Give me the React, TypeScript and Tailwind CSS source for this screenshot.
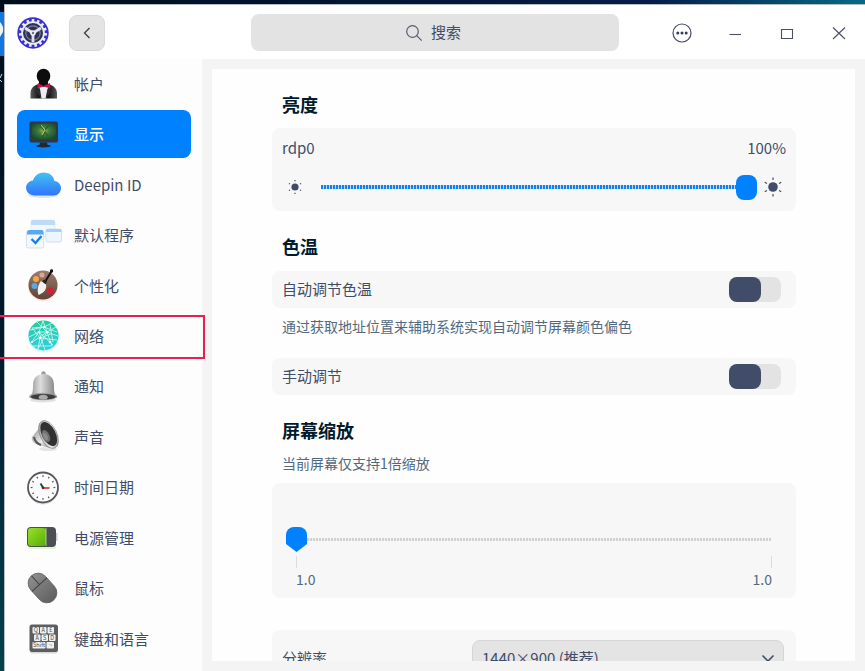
import React, { useState } from 'react';

const AccountIcon = () => (
  <>
    <defs>
      <linearGradient id="suit" x1="0" x2="1">
        <stop offset="0" stopColor="#5a5a5a" />
        <stop offset="0.3" stopColor="#161616" />
        <stop offset="0.7" stopColor="#161616" />
        <stop offset="1" stopColor="#5a5a5a" />
      </linearGradient>
    </defs>
    <path d="M5.500 32.500v-5c0-5 3-8 8-9.500h10c5 1.500 8.500 4.500 8.500 9.500v5z" fill="url(#suit)" />
    <path d="M13.500 20h10l-2.500 12.500h-5z" fill="#ececf2" />
    <path d="M13 20l2 3 1.500 9.500-5-6zM24.500 20l-2 3-2 9.500 5-6z" fill="#2c2c2c" />
    <ellipse cx="18.500" cy="10" rx="6.800" ry="7.300" fill="#0d0d0d" />
    <path d="M14 15h9v3l-4.500 3-4.500-3z" fill="#0d0d0d" />
    <path d="M13 17l5.500 3 6.500-3 .5 5.500-7-2-6.500 2z" fill="#c01350" />
  </>
);

const DisplayIcon = () => (
  <>
    <defs>
      <radialGradient id="screen" cx="0.5" cy="0.45" r="0.6">
        <stop offset="0" stopColor="#8fb84e" />
        <stop offset="0.4" stopColor="#3c7a3c" />
        <stop offset="1" stopColor="#164a32" />
      </radialGradient>
    </defs>
    <rect x="4.500" y="5.500" width="28.500" height="21" rx="2" fill="#33373d" />
    <rect x="6.500" y="7.500" width="24.500" height="16" fill="url(#screen)" />
    <path d="M15 9l5 6-3 7M24 9l-5 6 4 5" fill="none" stroke="#2b5a30" strokeWidth="1.200" />
    <path d="M16 9l4 5-3 5" fill="none" stroke="#c9d36a" strokeWidth="1" />
    <path d="M15 26.500h7l.5 2.500h-8z" fill="#24272b" />
    <ellipse cx="18.500" cy="30" rx="7.500" ry="1.500" fill="#24272b" />
  </>
);

const CloudIcon = () => (
  <>
    <defs>
      <linearGradient id="cloud" x1="0" y1="0" x2="0" y2="1">
        <stop offset="0" stopColor="#3fc4f4" />
        <stop offset="1" stopColor="#3373fb" />
      </linearGradient>
    </defs>
    <ellipse cx="18" cy="28" rx="15" ry="3" fill="#d7e6fb" />
    <path
      d="M9 28.500a8 8 0 0 1-8-7.500c0-4 3-7 7-7.500C9.500 9 13.500 5.500 19 5.500c5.500 0 9.500 3.500 10.500 8.500 4 .5 6.500 3.500 6.500 7 0 4-3 7.500-7.500 7.500z"
      fill="url(#cloud)"
    />
  </>
);

const DefaultAppsIcon = () => (
  <>
    <rect x="6" y="3" width="24" height="17" rx="2" fill="#f1f7fe" stroke="#dbe8f5" strokeWidth="0.7" />
    <path d="M6 8V5q0-2 2-2h20q2 0 2 2v3z" fill="#bedbf6" />
    <rect x="21" y="12" width="15.500" height="13" rx="1.500" fill="#edf5fe" stroke="#c5d8ea" strokeWidth="0.800" />
    <path d="M21 15v-1.500q0-1.500 1.500-1.500H35q1.500 0 1.500 1.500V15z" fill="#a9cff4" />
    <rect x="1.500" y="14" width="17" height="17" rx="1.500" fill="#f3f8fe" stroke="#cbdced" strokeWidth="0.800" />
    <path d="M2 17.500v-2Q2 13 4 13h12.500q2 0 2 2v2.500z" fill="#57a8f2" />
    <path d="M6.500 22l4 4 6-7" fill="none" stroke="#1582e8" strokeWidth="2.400" />
  </>
);

const PaletteIcon = () => (
  <>
    <defs>
      <linearGradient id="wood" x1="0" y1="0" x2="0" y2="1">
        <stop offset="0" stopColor="#9b7c6c" />
        <stop offset="1" stopColor="#5d4436" />
      </linearGradient>
    </defs>
    <circle cx="18" cy="18.500" r="15" fill="#f6d9cc" opacity="0.600" />
    <circle cx="18" cy="17" r="14.500" fill="url(#wood)" />
    <circle cx="11" cy="11" r="3" fill="#f2a840" />
    <circle cx="17" cy="7" r="2.600" fill="#e5a197" />
    <circle cx="9.500" cy="18" r="3" fill="#5aa7ea" />
    <circle cx="25" cy="23" r="3.500" fill="#cf2038" />
    <path d="M27 2.500l-8 13" stroke="#17120f" strokeWidth="2" strokeLinecap="round" />
    <circle cx="26.500" cy="3" r="1.700" fill="#17120f" />
    <path d="M16 13l5 3.500c1 5-2 8-7.500 10.500-2-6 0-10.500 2.500-14z" fill="#f4f1ee" />
    <path d="M17 13l3-1.500 2 1.500-1 3z" fill="#29211e" />
  </>
);

const NetworkIcon = () => (
  <>
    <defs>
      <linearGradient id="globe" x1="0" y1="0" x2="0" y2="1">
        <stop offset="0" stopColor="#29cba0" />
        <stop offset="1" stopColor="#2bd0e5" />
      </linearGradient>
    </defs>
    <circle cx="18.500" cy="19" r="15.500" fill="#cdf5f4" opacity="0.700" />
    <circle cx="18.500" cy="17.500" r="15" fill="url(#globe)" />
    <g fill="none" stroke="#c4f7ed" strokeWidth="0.900">
      <path d="M18 3l-4 11 6 18M18 3l4 11-9 17M5 12l14-3 13 5M4 19l10-5 8 0 11 4M6 25l8-11 14 13M31 9l-9 5-16 11M12 4l10 10 5 14M27 5l-8 4-12 1M7 10l8 10 17 2M15 20l-2 11M15 20l11-4M8 28l19 0M25 7l3 17" />
    </g>
    <g fill="#f0fffc">
      <circle cx="14" cy="14" r="1.300" />
      <circle cx="22" cy="14" r="1.300" />
      <circle cx="15" cy="20" r="1.300" />
      <circle cx="19" cy="9" r="1.200" />
      <circle cx="25" cy="24" r="1.300" />
      <circle cx="7" cy="24" r="1" />
    </g>
  </>
);

const BellIcon = () => (
  <>
    <defs>
      <linearGradient id="bell" x1="0" x2="1">
        <stop offset="0" stopColor="#8c8c8c" />
        <stop offset="0.4" stopColor="#dedede" />
        <stop offset="1" stopColor="#777" />
      </linearGradient>
    </defs>
    <ellipse cx="18" cy="31" rx="13" ry="2.500" fill="#e2e2e2" />
    <circle cx="18.500" cy="4.500" r="2.200" fill="#9c9c9c" />
    <path d="M4 28.500c3-2.500 4-5 4-12C8 9 12 5 18.500 5S29 9 29 16.500c0 7 .5 9.500 3.500 12z" fill="url(#bell)" />
    <ellipse cx="18.200" cy="27.500" rx="14" ry="3.800" fill="#a0a0a0" />
    <ellipse cx="18.200" cy="27.800" rx="12.500" ry="2.800" fill="#3c3c3c" />
    <ellipse cx="18.200" cy="28.300" rx="4.500" ry="2.500" fill="#aaa" />
  </>
);

const SpeakerIcon = () => (
  <>
    <defs>
      <linearGradient id="rim" x1="0" x2="1" y2="1">
        <stop offset="0" stopColor="#8e8e8e" />
        <stop offset="0.6" stopColor="#ececec" />
        <stop offset="1" stopColor="#777" />
      </linearGradient>
    </defs>
    <ellipse cx="23" cy="30" rx="9" ry="2" fill="#e5e5e5" />
    <path d="M7 18l8-10 11 21-13-3c-4-1-7-4-6-8z" fill="url(#rim)" />
    <path d="M9 18q1 6 7 8" fill="none" stroke="#555" strokeWidth="2" />
    <ellipse cx="23.500" cy="15.500" rx="8.300" ry="15" fill="url(#rim)" stroke="#707070" strokeWidth="0.500" transform="rotate(-26 23.500 15.500)" />
    <ellipse cx="23.700" cy="15" rx="6.800" ry="13" fill="#303030" transform="rotate(-26 23.700 15)" />
    <ellipse cx="21" cy="17" rx="3.500" ry="6.500" fill="#6e6e6e" transform="rotate(-26 21 17)" />
    <ellipse cx="20.500" cy="17.500" rx="2" ry="4" fill="#8b8b8b" transform="rotate(-26 20.500 17.500)" />
  </>
);

const ClockIcon = () => (
  <>
    <circle cx="18" cy="19" r="15.500" fill="#d9d9d9" opacity="0.700" />
    <circle cx="18" cy="17.500" r="15" fill="#fbfbfb" stroke="#55585c" strokeWidth="1.800" />
    {[0, 30, 60, 90, 120, 150, 180, 210, 240, 270, 300, 330].map((a) => (
      <path key={a} d="M18 5.200v1.800" stroke="#55585c" strokeWidth="1.200" transform={`rotate(${a} 18 17.500)`} />
    ))}
    <path d="M18 17.500l-2.500-4" stroke="#333" strokeWidth="1.800" />
    <path d="M18 18h6.500" stroke="#df4040" strokeWidth="1.800" />
    <circle cx="18" cy="17.800" r="1.400" fill="#333" />
  </>
);

const BatteryIcon = () => (
  <>
    <defs>
      <linearGradient id="charge" x1="0" y1="0" x2="1" y2="1">
        <stop offset="0" stopColor="#9be02a" />
        <stop offset="1" stopColor="#55ad05" />
      </linearGradient>
    </defs>
    <rect x="3" y="24" width="28" height="5" rx="2.500" fill="#e6f2d6" />
    <path d="M31 13h1.500v8H31z" fill="#c9cbd0" />
    <rect x="2" y="7" width="29" height="20" rx="4" fill="#4b4e54" />
    <rect x="3" y="8" width="18" height="18" rx="3" fill="url(#charge)" />
    <path d="M21 8v18" stroke="#c5e88d" strokeWidth="0.800" />
  </>
);

const MouseIcon = () => (
  <>
    <defs>
      <linearGradient id="mouse" x1="0" y1="0" x2="0" y2="1">
        <stop offset="0" stopColor="#8d8d8d" />
        <stop offset="1" stopColor="#606060" />
      </linearGradient>
    </defs>
    <g transform="rotate(-42 17.500 17)">
      <rect x="7.500" y="0.500" width="20" height="33" rx="10" fill="url(#mouse)" stroke="#5b5b5b" strokeWidth="0.800" />
      <path d="M7.500 12.500h20M17.500 0.500v12" stroke="#414141" strokeWidth="1" />
    </g>
  </>
);

const keys = [
  { x: 7.5, y: 6, w: 6.5, t: 'Q' },
  { x: 15, y: 6, w: 6.5, t: 'A' },
  { x: 22.5, y: 6, w: 6.5, t: 'E' },
  { x: 9, y: 13.5, w: 6.5, t: 'A' },
  { x: 16.5, y: 13.5, w: 6.5, t: 'S' },
  { x: 24, y: 13.5, w: 6.5, t: 'D' },
  { x: 7.5, y: 21, w: 13, t: 'Shift' },
  { x: 21.5, y: 21, w: 7.5, t: '¬' },
];

const KeyboardIcon = () => (
  <>
    <rect x="5" y="29" width="27.500" height="3.500" rx="1.700" fill="#d8d8d8" />
    <rect x="4.500" y="3.500" width="28.500" height="27.500" rx="2.500" fill="#5d5e60" />
    {keys.map((k) => (
      <g key={`${k.x}-${k.y}`}>
        <rect x={k.x} y={k.y} width={k.w} height="6.500" rx="1" fill="#f0f0f0" />
        <text x={k.x + k.w / 2} y={k.y + 5.2} textAnchor="middle" fontSize="5.500" fill="#4a4a4a">
          {k.t}
        </text>
      </g>
    ))}
  </>
);

const navItems = [
  { label: '帐户', icon: AccountIcon },
  { label: '显示', icon: DisplayIcon, active: true },
  { label: 'Deepin ID', icon: CloudIcon },
  { label: '默认程序', icon: DefaultAppsIcon },
  { label: '个性化', icon: PaletteIcon },
  { label: '网络', icon: NetworkIcon, marked: true },
  { label: '通知', icon: BellIcon },
  { label: '声音', icon: SpeakerIcon },
  { label: '时间日期', icon: ClockIcon },
  { label: '电源管理', icon: BatteryIcon },
  { label: '鼠标', icon: MouseIcon },
  { label: '键盘和语言', icon: KeyboardIcon },
];

const Logo = () => (
  <svg viewBox="0 0 32 32" className="h-8 w-8 shrink-0">
    <circle cx="16" cy="16" r="15.700" fill="#3a2fd0" />
    <circle cx="16" cy="16" r="11.800" fill="#e9ebf8" />
    {[0, 24, 48, 72, 96, 120, 144, 168, 192, 216, 240, 264, 288, 312, 336].map((a) => (
      <rect key={a} x="14.700" y="2" width="2.600" height="4" fill="#e9ebf8" transform={`rotate(${a} 16 16)`} />
    ))}
    <circle cx="16" cy="16" r="10" fill="#30334f" />
    <circle cx="16" cy="16" r="7.200" fill="none" stroke="#7d84a8" strokeWidth="1.200" />
    <path d="M16 16V25.500M16 16L8 11M16 16l8-5" stroke="#dfe2ee" strokeWidth="2.800" />
    <circle cx="16" cy="16" r="2.800" fill="#eef0fa" />
    <circle cx="16" cy="16" r="1.200" fill="#6b7196" />
  </svg>
);

const Header = () => (
  <header className="flex h-[54px] shrink-0 items-center bg-white pt-px pl-3">
    <Logo />
    <button
      aria-label="返回"
      className="ml-5 flex h-9 w-9 shrink-0 items-center justify-center rounded-lg border border-[#d9d9d9] bg-[#e4e4e4]"
    >
      <svg viewBox="0 0 16 16" className="h-4 w-4" fill="none" stroke="#444" strokeWidth="1.400">
        <path d="M10.500 3L5.500 8l5 5" />
      </svg>
    </button>
    <label className="ml-[146px] flex h-[37px] flex-1 items-center justify-center gap-2 rounded-lg bg-[#e3e3e3] pr-1">
      <svg viewBox="0 0 18 18" className="h-[18px] w-[18px]" fill="none" stroke="#566073" strokeWidth="1.200">
        <circle cx="7.500" cy="7.500" r="5.800" />
        <path d="M11.700 11.700l5 5" />
      </svg>
      <input
        type="search"
        aria-label="搜索"
        placeholder="搜索"
        className="field-sizing-content bg-transparent text-[15px] outline-none placeholder:text-[#414d68]"
      />
    </label>
    <div className="ml-9 flex shrink-0">
      <button aria-label="菜单" className="flex h-[52px] w-[54px] items-center justify-center">
        <svg viewBox="0 0 20 20" className="h-5 w-5">
          <circle cx="10" cy="10" r="9" fill="none" stroke="#454d63" strokeWidth="1.200" />
          <circle cx="5.800" cy="10" r="1.500" fill="#353d55" />
          <circle cx="10" cy="10" r="1.500" fill="#353d55" />
          <circle cx="14.200" cy="10" r="1.500" fill="#353d55" />
        </svg>
      </button>
      {[
        { label: '最小化', d: 'M4.500 11.500h11.500' },
        { label: '最大化', d: 'M4.500 6.500h11v9h-11z' },
        { label: '关闭', d: 'M4 4.500l12 11.500M16 4.500l-12 11.500' },
      ].map((b) => (
        <button key={b.label} aria-label={b.label} className="flex h-[52px] w-[52px] items-center justify-center">
          <svg viewBox="0 0 20 20" className="h-5 w-5" fill="none" stroke="#4a4f62" strokeWidth="1.100">
            <path d={b.d} />
          </svg>
        </button>
      ))}
    </div>
  </header>
);

const Sidebar = () => (
  <nav className="w-[197px] shrink-0 bg-[#fdfdfd] pt-px pr-[11px] pb-2 pl-3">
    <ul className="flex h-full flex-col justify-between">
      {navItems.map(({ label, icon: Icon, active, marked }) => (
        <li key={label} className="relative">
          <a
            href="#"
            className={`flex h-12 items-center gap-[13px] rounded-lg pl-2 text-[15px] ${
              active ? 'bg-[#0081ff] font-medium text-white' : 'text-[#414d68]'
            }`}
          >
            <svg viewBox="0 0 36 36" className="h-9 w-9 shrink-0 overflow-visible">
              <Icon />
            </svg>
            {label}
          </a>
          {marked && (
            <span className="pointer-events-none absolute top-[3px] -right-[14px] bottom-px -left-[19px] border-2 border-[#e8204f]" />
          )}
        </li>
      ))}
    </ul>
  </nav>
);

interface SunProps {
  rays: string;
  r: number;
}

const Sun: React.FC<SunProps> = ({ rays, r }) => (
  <svg viewBox="0 0 20 20" className="h-5 w-5 shrink-0">
    <circle cx="10" cy="10" r={r} fill="#414d68" />
    {[0, 60, 120, 180, 240, 300].map((a) => (
      <path key={a} d={rays} stroke="#414d68" strokeWidth="1.200" transform={`rotate(${a} 10 10)`} />
    ))}
  </svg>
);

interface SwitchRowProps {
  label: string;
}

const SwitchRow: React.FC<SwitchRowProps> = ({ label }) => {
  const [on, setOn] = useState(false);
  return (
    <label className="flex h-[37px] items-center justify-between rounded-lg bg-[#f7f7f7] pr-[15px] pl-[10px]">
      {label}
      <input
        type="checkbox"
        role="switch"
        checked={on}
        onChange={(e) => setOn(e.target.checked)}
        className="flex h-[25px] w-[52px] appearance-none rounded-lg bg-[#e3e3e3] before:h-[25px] before:w-8 before:rounded-lg before:bg-[#414d68] checked:justify-end checked:before:bg-[#0081ff]"
      />
    </label>
  );
};

const heading = 'px-[10px] text-lg leading-7 font-bold text-[#001a2e]';
const hint = 'px-[10px] text-sm leading-5 text-[#526a7f]';

const DisplaySettings = () => {
  const [brightness, setBrightness] = useState(100);
  return (
    <div className="h-full overflow-y-auto bg-[#fefefe] pt-[21px] pr-[59px] pl-[60px] [scrollbar-width:none]">
      <h2 className={heading}>亮度</h2>
      <section className="mt-[10px] rounded-lg bg-[#f7f7f7] px-[10px] pt-[9px] pb-3">
        <div className="flex justify-between leading-[22px]">
          <label htmlFor="brightness">rdp0</label>
          <span>{brightness}%</span>
        </div>
        <div className="mt-[15px] flex items-center pr-[3px] pl-[3px]">
          <Sun r={3.6} rays="M10 3v1.200" />
          <input
            id="brightness"
            type="range"
            min={0}
            max={100}
            value={brightness}
            onChange={(e) => setBrightness(Number(e.target.value))}
            className="mr-[6px] ml-4 h-[25px] min-w-0 flex-1 appearance-none bg-transparent [&::-webkit-slider-runnable-track]:h-1 [&::-webkit-slider-runnable-track]:bg-[repeating-linear-gradient(90deg,#1480f0_0px_2px,#b4dbff_2px_3px)] [&::-webkit-slider-thumb]:-mt-[10px] [&::-webkit-slider-thumb]:h-[25px] [&::-webkit-slider-thumb]:w-[21px] [&::-webkit-slider-thumb]:appearance-none [&::-webkit-slider-thumb]:rounded-lg [&::-webkit-slider-thumb]:bg-[#0081ff]"
          />
          <Sun r={4.8} rays="M10 0.500v2.500" />
        </div>
      </section>

      <h2 className={`mt-[21px] ${heading}`}>色温</h2>
      <div className="mt-[11px]">
        <SwitchRow label="自动调节色温" />
      </div>
      <p className={`mt-2 ${hint}`}>通过获取地址位置来辅助系统实现自动调节屏幕颜色偏色</p>
      <div className="mt-[22px]">
        <SwitchRow label="手动调节" />
      </div>

      <h2 className={`mt-[21px] ${heading}`}>屏幕缩放</h2>
      <p className={`mt-[9px] ${hint}`}>当前屏幕仅支持1倍缩放</p>
      <section className="mt-[10px] rounded-lg bg-[#f7f7f7] pt-11 pr-6 pb-2 pl-[14px]">
        <input
          type="range"
          aria-label="屏幕缩放"
          min={0}
          max={1}
          defaultValue={0}
          className="block h-[25px] w-full appearance-none bg-transparent [&::-webkit-slider-runnable-track]:h-[3px] [&::-webkit-slider-runnable-track]:bg-[repeating-linear-gradient(90deg,#d2d2d2_0px_2px,#f3f3f3_2px_3px)] [&::-webkit-slider-thumb]:-mt-[11px] [&::-webkit-slider-thumb]:h-[25px] [&::-webkit-slider-thumb]:w-[21px] [&::-webkit-slider-thumb]:appearance-none [&::-webkit-slider-thumb]:rounded-t-lg [&::-webkit-slider-thumb]:bg-[#0081ff] [&::-webkit-slider-thumb]:[clip-path:polygon(0_0,100%_0,100%_68%,50%_100%,0_68%)]"
        />
        <div className="mt-1 ml-[10px] h-3 border-x border-[#dcdcdc]" />
        <div className="ml-[10px] flex justify-between text-sm leading-[22px] text-[#526a7f]">
          <span>1.0</span>
          <span>1.0</span>
        </div>
      </section>

      <section className="mt-8 flex items-center rounded-lg bg-[#f7f7f7] py-[10px] pr-3 pl-[10px]">
        <label htmlFor="resolution" className="w-[190px] shrink-0">
          分辨率
        </label>
        <div className="relative min-w-0 flex-1">
          <select
            id="resolution"
            className="block h-9 w-full appearance-none rounded-lg border border-[#d6d6d6] bg-[#e4e4e4] px-[9px] outline-none"
          >
            <option>1440×900 (推荐)</option>
          </select>
          <svg
            viewBox="0 0 14 14"
            className="pointer-events-none absolute top-[11px] right-[9px] h-[14px] w-[14px]"
            fill="none"
            stroke="#414d68"
            strokeWidth="1.600"
          >
            <path d="M1.500 4.500L7 10l5.500-5.500" />
          </svg>
        </div>
      </section>
    </div>
  );
};

// Slice of the desktop that shows to the left of the window
const DesktopEdge = () => (
  <div className="w-1 shrink-0 bg-linear-to-b from-[#000d1b] via-[#021a2c] to-[#04414c]">
    <svg viewBox="0 0 4 100" className="h-[100px] w-1">
      <rect y="8" width="4" height="44" fill="#1377dc" />
      <path d="M0 18q4 4 3 10l-3 5z" fill="#e8f3ff" />
      <path d="M2 70L0 74M0 76l2 2" stroke="#d5dce2" strokeWidth="1" />
    </svg>
  </div>
);

const App = () => {
  return (
    <div className="flex h-screen flex-col overflow-hidden bg-[#021a2c] font-['Noto_Sans_CJK_SC',sans-serif] text-[15px] text-[#414d68]">
      <div className="h-1 shrink-0 bg-linear-to-r from-[#000d1b] via-[#061c46] via-75% to-[#046b85]" />
      <div className="flex min-h-0 flex-1">
        <DesktopEdge />
        <div className="flex min-w-0 flex-1 flex-col border-t border-l border-[#b5bcc5]">
          <Header />
          <div className="flex min-h-0 flex-1">
            <Sidebar />
            <main className="min-w-0 flex-1 bg-[#f4f4f4] p-[10px]">
              <DisplaySettings />
            </main>
          </div>
        </div>
      </div>
    </div>
  );
};

export default App;
